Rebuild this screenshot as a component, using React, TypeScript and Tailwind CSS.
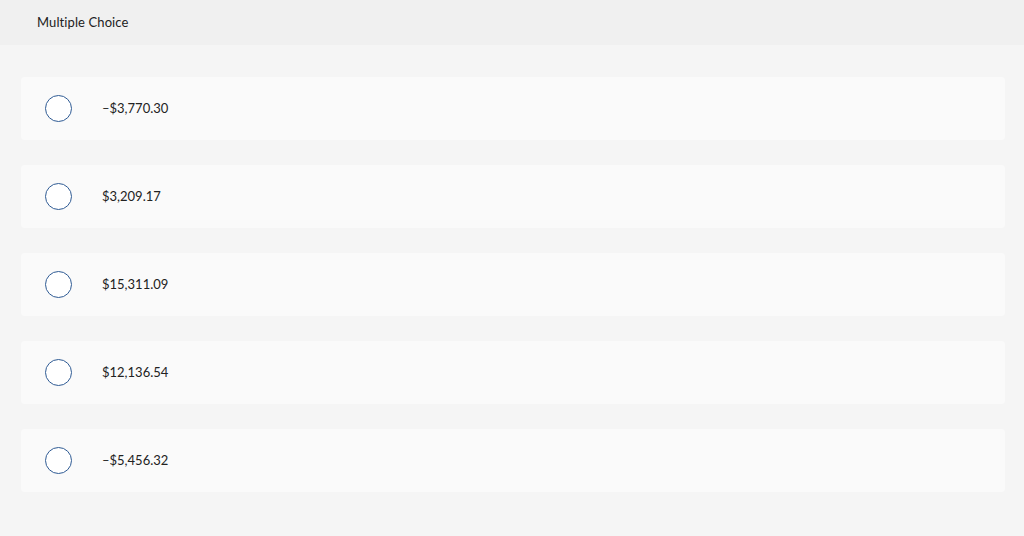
import React from "react";

const options = ["–$3,770.30", "$3,209.17", "$15,311.09", "$12,136.54", "–$5,456.32"];

export default function App() {
  return (
    <div className="w-[1024px] h-[536px] bg-[#f5f5f5] font-['Lato','Open_Sans',sans-serif] text-[#222]">
      <div className="h-[45px] bg-[#f0f0f0] flex items-center pl-[37px] text-[13px] tracking-[0.1px] text-[#222]">
        Multiple Choice
      </div>
      <div className="flex flex-col gap-[25px] pt-[32px] pl-[21px] pr-[19px]">
        {options.map((o) => (
          <div key={o} className="h-[63px] bg-[#fafafa] rounded-[4px] flex items-center pl-[24px]">
            <div className="w-[27px] h-[27px] rounded-full border border-[#2f5b94] bg-white shrink-0" />
            <div className="ml-[30px] text-[13px] text-[#222]">{o}</div>
          </div>
        ))}
      </div>
    </div>
  );
}
